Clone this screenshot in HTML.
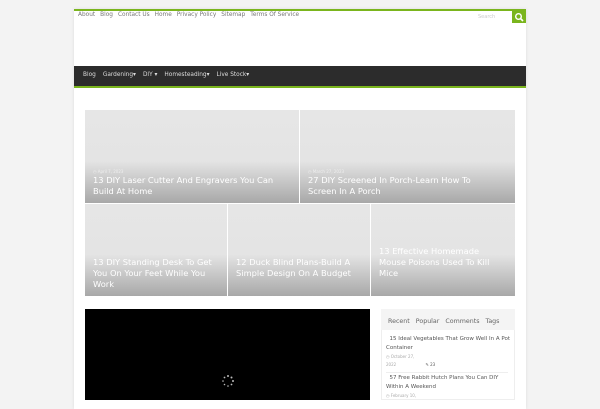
<!DOCTYPE html>
<html><head><style>
*{margin:0;padding:0;box-sizing:border-box}
body{width:600px;height:400px;overflow:hidden;background:#f3f3f3;font-family:"DejaVu Sans","Liberation Sans",sans-serif;position:relative}
.abs{position:absolute}
.wrap{left:74px;top:9px;width:452px;height:400px;background:#fff;box-shadow:0 0 3px #ddd}
.top{left:74px;top:9px;width:452px;height:2px;background:#7ab51d}
.tnav{left:78px;top:12px;font-size:5.8px;color:#777;white-space:nowrap}
.tnav span{margin-right:5px}
.dark{left:74px;top:66px;width:452px;height:20px;background:#2c2c2c}
.green2{left:74px;top:86px;width:452px;height:2px;background:#7ab51d}
.mnav{left:83px;top:72px;font-size:5.8px;color:#ddd;white-space:nowrap}
.mnav span{margin-right:7px}
.tile{background:linear-gradient(#e6e6e6 0,#e4e4e4 55%,#a8a8a8 100%);color:#fff;font-size:8.3px;line-height:11px}
.tile .t{position:absolute;left:8px;bottom:6px;right:8px}
.tile .d{font-size:4px;color:#eee;line-height:6px}
</style></head><body>
<div class="abs wrap"></div>
<div class="abs top"></div>
<div class="abs tnav"><span>About</span><span>Blog</span><span>Contact Us</span><span>Home</span><span>Privacy Policy</span><span>Sitemap</span><span>Terms Of Service</span></div>
<div class="abs" style="left:474px;top:11px;width:38px;height:12px;background:#fff;font-size:5px;color:#ccc;padding:3px 4px">Search</div>
<div class="abs" style="left:512px;top:9px;width:14px;height:14px;background:#7ab51d"><svg width="14" height="14"><circle cx="6.5" cy="6.5" r="2.8" fill="none" stroke="#fff" stroke-width="1.4"/><path d="M8.5 8.5L11 11" stroke="#fff" stroke-width="1.6"/></svg></div>
<div class="abs dark"></div><div class="abs green2"></div>
<div class="abs mnav"><span>Blog</span><span>Gardening▾</span><span>DIY ▾</span><span>Homesteading▾</span><span>Live Stock▾</span></div>

<div class="abs tile" style="left:85px;top:110px;width:214px;height:93px"><div class="t"><div class="d">◷ April 7, 2023</div>13 DIY Laser Cutter And Engravers You Can Build At Home</div></div>
<div class="abs tile" style="left:300px;top:110px;width:215px;height:93px"><div class="t" style="right:20px"><div class="d">◷ March 27, 2023</div>27 DIY Screened In Porch-Learn How To Screen In A Porch</div></div>
<div class="abs tile" style="left:85px;top:204px;width:142px;height:92px"><div class="t"><div class="d">&nbsp;</div>13 DIY Standing Desk To Get You On Your Feet While You Work</div></div>
<div class="abs tile" style="left:228px;top:204px;width:142px;height:92px"><div class="t" style="bottom:17px"><div class="d">&nbsp;</div>12 Duck Blind Plans-Build A Simple Design On A Budget</div></div>
<div class="abs tile" style="left:371px;top:204px;width:144px;height:92px"><div class="t" style="bottom:17px"><div class="d">&nbsp;</div>13 Effective Homemade Mouse Poisons Used To Kill Mice</div></div>

<div class="abs" style="left:85px;top:309px;width:285px;height:91px;background:#000"></div>
<svg class="abs" style="left:221px;top:374px" width="14" height="14"><g fill="#bbb"><circle cx="7" cy="2" r="1"/><circle cx="10.5" cy="3.5" r="1"/><circle cx="12" cy="7" r="1"/><circle cx="10.5" cy="10.5" r=".9"/><circle cx="7" cy="12" r=".8"/><circle cx="3.5" cy="10.5" r=".8"/><circle cx="2" cy="7" r=".8"/><circle cx="3.5" cy="3.5" r=".9"/></g></svg>

<div class="abs" style="left:381px;top:309px;width:134px;height:91px;background:#fff;border:1px solid #eee"></div>
<div class="abs" style="left:381px;top:309px;width:134px;height:21px;background:#f4f4f4;font-size:6.3px;color:#666;padding:9px 7px 0;white-space:nowrap">Recent &nbsp;&nbsp;Popular &nbsp;&nbsp;Comments &nbsp;&nbsp;Tags</div>
<div class="abs" style="left:386px;top:335px;width:130px;font-size:5.5px;line-height:9px;color:#555">&nbsp;&nbsp;15 Ideal Vegetables That Grow Well In A Pot Container<div style="font-size:4px;color:#aaa;line-height:8px">◷ October 27,<br>2022 <span style="margin-left:28px;color:#555">✎ 23</span></div></div>
<div class="abs" style="left:386px;top:372px;width:122px;height:1px;background:#eee"></div>
<div class="abs" style="left:386px;top:374px;width:130px;font-size:5.5px;line-height:9px;color:#555">&nbsp;&nbsp;57 Free Rabbit Hutch Plans You Can DIY Within A Weekend<div style="font-size:4px;color:#aaa;line-height:8px">◷ February 10,</div></div>
</body></html>
